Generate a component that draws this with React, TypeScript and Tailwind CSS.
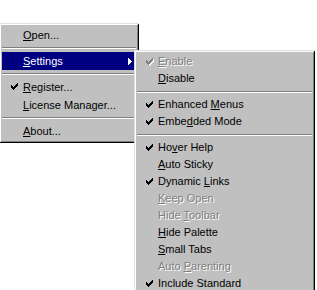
import React from "react";

type Item =
  | { sep: true }
  | {
      sep?: false;
      label: string;
      u?: number; // index of underlined char
      checked?: boolean;
      disabled?: boolean;
      highlight?: boolean;
      arrow?: boolean;
    };

const CHECK_RECTS: [number, number, number][] = [
  // [x, y, width]
  [6, 0, 1],
  [5, 1, 2],
  [0, 2, 1],
  [4, 2, 3],
  [0, 3, 2],
  [3, 3, 3],
  [0, 4, 5],
  [1, 5, 3],
  [2, 6, 1],
];

function Check({ color, shadow }: { color: string; shadow?: boolean }) {
  return (
    <svg width="8" height="8" viewBox="0 0 8 8" shapeRendering="crispEdges" className="block">
      {shadow &&
        CHECK_RECTS.map(([x, y, w], i) => (
          <rect key={"s" + i} x={x + 1} y={y + 1} width={w} height={1} fill="#ffffff" />
        ))}
      {CHECK_RECTS.map(([x, y, w], i) => (
        <rect key={i} x={x} y={y} width={w} height={1} fill={color} />
      ))}
    </svg>
  );
}

function Arrow() {
  return (
    <svg width="4" height="7" viewBox="0 0 4 7" shapeRendering="crispEdges" className="block">
      <rect x="0" y="0" width="1" height="7" fill="#fff" />
      <rect x="1" y="1" width="1" height="5" fill="#fff" />
      <rect x="2" y="2" width="1" height="3" fill="#fff" />
      <rect x="3" y="3" width="1" height="1" fill="#fff" />
    </svg>
  );
}

function Label({ text, u }: { text: string; u?: number }) {
  if (u === undefined) return <>{text}</>;
  return (
    <>
      {text.slice(0, u)}
      <span className="underline decoration-1 underline-offset-[1px]">{text[u]}</span>
      {text.slice(u + 1)}
    </>
  );
}

function Menu({
  items,
  itemH,
  sepH,
  className,
}: {
  items: Item[];
  itemH: string;
  sepH: string;
  className: string;
}) {
  return (
    <div
      className={
        "absolute bg-[#c0c0c0] p-[3px] shadow-[inset_1px_1px_0_#dfdfdf,inset_-1px_-1px_0_#000000,inset_2px_2px_0_#ffffff,inset_-2px_-2px_0_#808080] " +
        className
      }
    >
      {items.map((it, i) => {
        if (it.sep) {
          return (
            <div key={i} className={"flex flex-col justify-center " + sepH}>
              <div className="h-px bg-[#808080]" />
              <div className="h-px bg-white" />
            </div>
          );
        }
        const textCls = it.highlight
          ? "text-white"
          : it.disabled
          ? "text-[#808080] [text-shadow:1px_1px_0_#ffffff]"
          : "text-black";
        return (
          <div
            key={i}
            className={
              "flex items-center " + itemH + (it.highlight ? " bg-[#000080]" : "")
            }
          >
            <div className="w-[21px] h-full flex items-center pl-[9px] shrink-0">
              {it.checked && (
                <Check
                  color={it.disabled ? "#808080" : it.highlight ? "#ffffff" : "#000000"}
                  shadow={it.disabled}
                />
              )}
            </div>
            <div className={"whitespace-nowrap leading-none " + textCls}>
              <Label text={it.label} u={it.u} />
            </div>
            {it.arrow && (
              <div className="ml-auto mr-[4px]">
                <Arrow />
              </div>
            )}
          </div>
        );
      })}
    </div>
  );
}

const mainItems: Item[] = [
  { label: "Open...", u: 0 },
  { sep: true },
  { label: "Settings", u: 0, highlight: true, arrow: true },
  { sep: true },
  { label: "Register...", u: 0, checked: true },
  { label: "License Manager...", u: 0 },
  { sep: true },
  { label: "About...", u: 0 },
];

const subItems: Item[] = [
  { label: "Enable", u: 0, checked: true, disabled: true },
  { label: "Disable", u: 0 },
  { sep: true },
  { label: "Enhanced Menus", u: 9, checked: true },
  { label: "Embedded Mode", u: 4, checked: true },
  { sep: true },
  { label: "Hover Help", u: 2, checked: true },
  { label: "Auto Sticky", u: 0 },
  { label: "Dynamic Links", u: 8, checked: true },
  { label: "Keep Open", u: 0, disabled: true },
  { label: "Hide Toolbar", u: 5, disabled: true },
  { label: "Hide Palette", u: 0 },
  { label: "Small Tabs", u: 0 },
  { label: "Auto Parenting", u: 5, disabled: true },
  { label: "Include Standard", checked: true },
];

export default function App() {
  return (
    <div
      className="relative w-[317px] h-[290px] overflow-hidden bg-white text-[11px]"
      style={{ fontFamily: '"Liberation Sans", Arial, sans-serif' }}
    >
      <Menu
        items={mainItems}
        itemH="h-[18px]"
        sepH="h-[8px]"
        className="left-[-1px] top-[23px] w-[140px]"
      />
      <Menu
        items={subItems}
        itemH="h-[17px]"
        sepH="h-[9px]"
        className="left-[134px] top-[50px] w-[181px]"
      />
    </div>
  );
}
